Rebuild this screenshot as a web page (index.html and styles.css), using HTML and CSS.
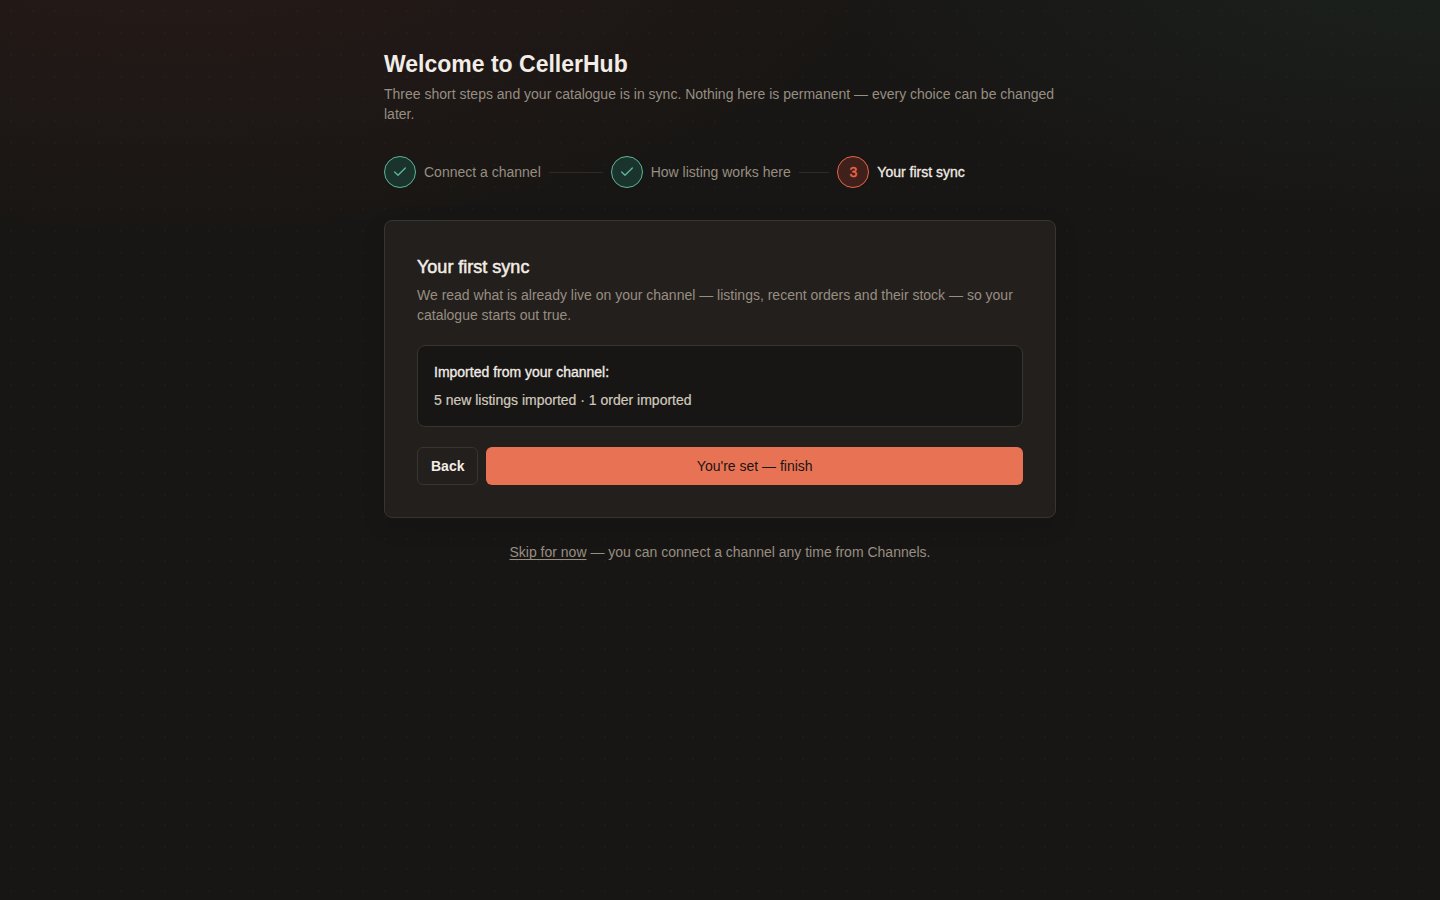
FILE: index.html
```html
<!DOCTYPE html>
<html lang="en">
<head>
<meta charset="utf-8">
<meta name="viewport" content="width=device-width, initial-scale=1">
<title>Welcome to CellerHub</title>
<link rel="stylesheet" href="styles.css">
</head>
<body>
<main class="onboarding">
  <header class="intro">
    <h1 class="intro-title">Welcome to CellerHub</h1>
    <p class="muted">Three short steps and your catalogue is in sync. Nothing here is permanent — every choice can be changed later.</p>
  </header>

  <ol class="steps">
    <li class="step">
      <span class="step-badge step-badge-done">
        <svg class="check" viewBox="0 0 24 24" aria-hidden="true"><path d="M20 6 9 17l-5-5"/></svg>
      </span>
      <span class="step-label">Connect a channel</span>
      <span class="step-line"></span>
    </li>
    <li class="step">
      <span class="step-badge step-badge-done">
        <svg class="check" viewBox="0 0 24 24" aria-hidden="true"><path d="M20 6 9 17l-5-5"/></svg>
      </span>
      <span class="step-label">How listing works here</span>
      <span class="step-line"></span>
    </li>
    <li class="step" aria-current="step">
      <span class="step-badge step-badge-current">3</span>
      <span class="step-label step-label-current">Your first sync</span>
    </li>
  </ol>

  <section class="card">
    <div class="card-head">
      <h2 class="card-title">Your first sync</h2>
      <p class="muted">We read what is already live on your channel — listings, recent orders and their stock — so your catalogue starts out true.</p>
    </div>
    <div class="result">
      <p class="result-title">Imported from your channel:</p>
      <p class="result-text">5 new listings imported · 1 order imported</p>
    </div>
    <div class="actions">
      <button class="button button-back" type="button">Back</button>
      <button class="button button-primary" type="button">You're set — finish</button>
    </div>
  </section>

  <p class="skip"><a class="skip-link" href="#channels">Skip for now</a> — you can connect a channel any time from Channels.</p>
</main>
</body>
</html>
```
FILE: styles.css
```css
* {
  box-sizing: border-box;
}

body {
  margin: 0;
  min-height: 100vh;
  background-color: #181614;
  background-image:
    radial-gradient(circle at 50% 50%, rgba(255, 255, 255, 0.02) 1px, transparent 1px),
    radial-gradient(760px 330px at 12% -10%, rgba(232, 80, 70, 0.08), transparent 100%),
    radial-gradient(640px 260px at 100% -4%, rgba(60, 140, 120, 0.09), transparent 100%);
  background-size: 22px 22px, auto, auto;
  color: #f2ede6;
  font: 14px/20px "Liberation Sans", Arial, sans-serif;
}

h1, h2, p, ol {
  margin: 0;
  padding: 0;
}

.onboarding {
  display: flex;
  flex-direction: column;
  gap: 32px;
  max-width: 720px;
  margin: 0 auto;
  padding: 48px 24px;
}

.intro,
.card-head {
  display: flex;
  flex-direction: column;
  gap: 4px;
}

.intro-title {
  font-size: 23px;
  line-height: 32px;
  font-weight: 700;
}

.muted,
.skip {
  color: #978e82;
}

.steps {
  display: grid;
  grid-template-columns: repeat(3, 1fr);
  gap: 8px;
  list-style: none;
}

.step {
  display: flex;
  align-items: center;
  gap: 8px;
}

.step-badge {
  display: flex;
  flex: none;
  align-items: center;
  justify-content: center;
  width: 32px;
  height: 32px;
  border: 1px solid;
  border-radius: 50%;
}

.step-badge-done {
  background: #1a332c;
  color: #5db598;
}

.step-badge-current {
  background: #3f201a;
  color: #e9654a;
  -webkit-text-stroke: 0.5px;
}

.check {
  width: 16px;
  height: 16px;
  fill: none;
  stroke: currentColor;
  stroke-width: 2;
  stroke-linecap: round;
  stroke-linejoin: round;
}

.step-label {
  color: #978e82;
  white-space: nowrap;
}

.step-label-current {
  color: #f2ede6;
  -webkit-text-stroke: 0.3px;
}

.step-line {
  flex: 1;
  height: 1px;
  background: #2e2a27;
}

.card {
  display: flex;
  flex-direction: column;
  gap: 20px;
  padding: 32px;
  border: 1px solid #383430;
  border-radius: 8px;
  background: #231f1c;
  box-shadow: 0 8px 24px rgba(0, 0, 0, 0.12);
}

.card-title {
  font-size: 18px;
  line-height: 28px;
  font-weight: 400;
  -webkit-text-stroke: 0.5px;
}

.result {
  display: flex;
  flex-direction: column;
  gap: 8px;
  padding: 16px;
  border: 1px solid #383430;
  border-radius: 8px;
  background: #181614;
}

.result-title {
  -webkit-text-stroke: 0.3px;
}

.result-text {
  color: #d0c9bf;
  -webkit-text-stroke: 0.2px;
}

.actions {
  display: flex;
  gap: 8px;
}

.button {
  padding: 8px 13px;
  border: 1px solid transparent;
  border-radius: 6px;
  font: inherit;
  cursor: pointer;
}

.button-back {
  border-color: #383430;
  background: transparent;
  color: #f2ede6;
  font-weight: 700;
}

.button-primary {
  flex: 1;
  background: #e87354;
  color: #181614;
}

.skip {
  margin-top: -8px;
  text-align: center;
}

.skip-link {
  color: inherit;
  text-underline-offset: 2px;
  text-decoration-skip-ink: none;
}
```
